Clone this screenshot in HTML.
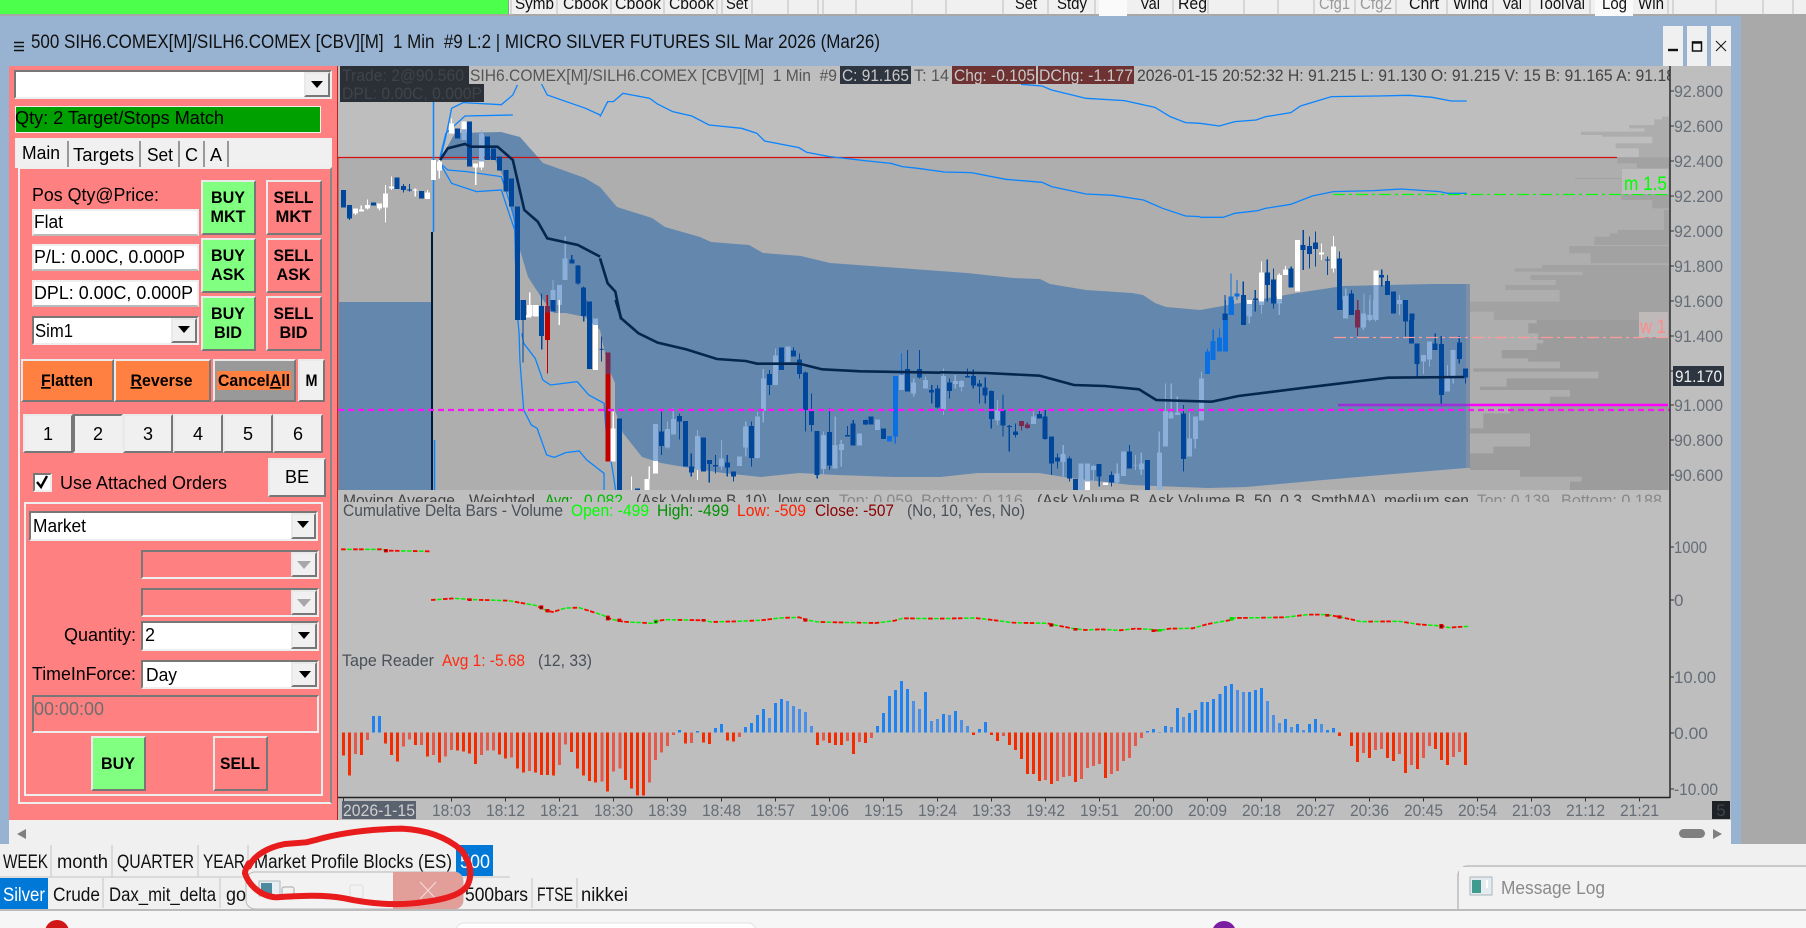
<!DOCTYPE html>
<html><head><meta charset="utf-8"><title>Chart</title>
<style>
html,body{margin:0;padding:0;width:1806px;height:928px;overflow:hidden;background:#f0f0f0}
.a{position:absolute;box-sizing:border-box}
.b{position:absolute;box-sizing:border-box;border:2px solid;border-color:#e9e9e9 #777 #777 #e9e9e9;background:#f0f0f0}
.s{position:absolute;box-sizing:border-box;border:2px solid;border-color:#777 #eee #eee #777;background:#fff}
.g{background:#80ff80}.p{background:#ff8080}.o{background:#ff8040}
svg{position:absolute;left:0;top:0}
text{font-family:"Liberation Sans",sans-serif;font-size:17px}
.pn text{font-size:18px}
.pn g text{font-size:17px}
.z path{fill:none;vector-effect:non-scaling-stroke}
.z path.f{stroke:none}
.w{stroke-width:1.2;shape-rendering:crispEdges}
.k{stroke-width:5;shape-rendering:crispEdges}
.D{stroke:#00479b}.L{stroke:#8bafd8}.W{stroke:#fff}.B{stroke:#0a6fe0}.R{stroke:#c00000}.P{stroke:#7a2a50}
.l{stroke:#0a84ff;stroke-width:1.3}
.m{stroke:#05264f;stroke-width:2.6}
.t{stroke-width:3;shape-rendering:crispEdges}
</style></head>
<body>
<!-- top strip -->
<div class="a" style="left:0;top:0;width:509px;height:14px;background:#4cff4c;border-right:1px solid #8aa08a"></div>
<div class="a" style="left:0;top:14px;width:1806px;height:2px;background:#a8a8a8"></div>
<div class="a" style="left:1099px;top:0;width:28px;height:16px;background:#fafafa"></div>
<div class="a" style="left:1595px;top:0;width:38px;height:16px;background:#fafafa"></div>
<!-- blue window -->
<div class="a" style="left:0;top:16px;width:1741px;height:828px;background:#98b3d1"></div>
<div class="a" style="left:1741px;top:16px;width:65px;height:828px;background:#a9a9a9"></div>
<div class="a" style="left:9px;top:820px;width:1722px;height:24px;background:#f0f0f0"></div>
<div class="a" style="left:1663px;top:26px;width:20px;height:40px;background:#f0f0f0"></div>
<div class="a" style="left:1687px;top:26px;width:20px;height:40px;background:#f0f0f0"></div>
<div class="a" style="left:1711px;top:26px;width:20px;height:40px;background:#f0f0f0"></div>
<!-- left panel -->
<div class="a" style="left:9px;top:66px;width:329px;height:754px;background:#ff8080;border-right:1px solid #c02020"></div>
<div class="s" style="left:14px;top:70px;width:318px;height:29px"></div>
<div class="b" style="left:304px;top:72px;width:26px;height:25px"></div>
<div class="a" style="left:15px;top:106px;width:306px;height:27px;background:#00a000;border:1px solid #eee"></div>
<div class="a" style="left:15px;top:138px;width:317px;height:30px;background:#f0f0f0"></div>
<div class="a" style="left:67px;top:141px;width:2px;height:26px;background:#999"></div>
<div class="a" style="left:139px;top:141px;width:2px;height:26px;background:#999"></div>
<div class="a" style="left:178px;top:141px;width:2px;height:26px;background:#999"></div>
<div class="a" style="left:203px;top:141px;width:2px;height:26px;background:#999"></div>
<div class="a" style="left:227px;top:141px;width:2px;height:26px;background:#999"></div>
<div class="a" style="left:18px;top:167px;width:314px;height:637px;border:2px solid;border-color:#eee #888 #eee #eee"></div>
<div class="s" style="left:32px;top:209px;width:167px;height:27px;border-color:#eee #eee #bbb #eee"></div>
<div class="s" style="left:32px;top:244px;width:167px;height:27px;border-color:#eee #eee #bbb #eee"></div>
<div class="s" style="left:32px;top:280px;width:167px;height:27px;border-color:#eee #eee #bbb #eee"></div>
<div class="s" style="left:32px;top:316px;width:167px;height:29px"></div>
<div class="b" style="left:171px;top:318px;width:26px;height:25px"></div>
<div class="b g" style="left:201px;top:180px;width:55px;height:55px"></div>
<div class="b p" style="left:266px;top:180px;width:56px;height:55px"></div>
<div class="b g" style="left:201px;top:238px;width:55px;height:55px"></div>
<div class="b p" style="left:266px;top:238px;width:56px;height:55px"></div>
<div class="b g" style="left:201px;top:296px;width:55px;height:55px"></div>
<div class="b p" style="left:266px;top:296px;width:56px;height:55px"></div>
<div class="b o" style="left:21px;top:359px;width:93px;height:43px"></div>
<div class="b o" style="left:114px;top:359px;width:97px;height:43px"></div>
<div class="b" style="left:213px;top:359px;width:83px;height:43px;background:#999"></div>
<div class="a o" style="left:217px;top:371px;width:74px;height:19px"></div>
<div class="b" style="left:298px;top:359px;width:27px;height:43px"></div>
<div class="b" style="left:23px;top:414px;width:50px;height:39px"></div>
<div class="b" style="left:73px;top:414px;width:50px;height:39px;border-color:#777 #eee #eee #777"></div>
<div class="b" style="left:123px;top:414px;width:50px;height:39px"></div>
<div class="b" style="left:173px;top:414px;width:50px;height:39px"></div>
<div class="b" style="left:223px;top:414px;width:50px;height:39px"></div>
<div class="b" style="left:273px;top:414px;width:50px;height:39px"></div>
<div class="b" style="left:268px;top:458px;width:58px;height:39px"></div>
<div class="s" style="left:33px;top:473px;width:19px;height:19px"></div>
<div class="a" style="left:24px;top:502px;width:299px;height:294px;border:2px solid #eee"></div>
<div class="s" style="left:29px;top:511px;width:289px;height:30px"></div>
<div class="b" style="left:291px;top:513px;width:25px;height:26px"></div>
<div class="s" style="left:141px;top:550px;width:178px;height:29px;background:#ff8080"></div>
<div class="b" style="left:291px;top:552px;width:26px;height:25px"></div>
<div class="s" style="left:141px;top:588px;width:178px;height:29px;background:#ff8080"></div>
<div class="b" style="left:291px;top:590px;width:26px;height:25px"></div>
<div class="s" style="left:141px;top:621px;width:178px;height:30px"></div>
<div class="b" style="left:291px;top:623px;width:26px;height:26px"></div>
<div class="s" style="left:141px;top:660px;width:178px;height:29px"></div>
<div class="b" style="left:291px;top:662px;width:26px;height:25px"></div>
<div class="s" style="left:32px;top:695px;width:287px;height:38px;background:#ff8080"></div>
<div class="b g" style="left:91px;top:736px;width:55px;height:55px"></div>
<div class="b p" style="left:213px;top:736px;width:55px;height:55px"></div>

<svg width="1806" height="928" viewBox="0 0 1806 928">
<!-- toolbar separators -->
<path d="M511 0V15M557 0V15M611 0V15M664 0V15M717 0V15M722 0V15M752 0V15M788 0V15M818 0V15M823 0V15M856 0V15M912 0V15M946 0V15M1003 0V15M1048 0V15M1095 0V15M1173 0V15M1208 0V15M1244 0V15M1278 0V15M1314 0V15M1355 0V15M1396 0V15M1447 0V15M1493 0V15M1530 0V15M1590 0V15M1668 0V15M1673 0V15M1716 0V15M1763 0V15M1793 0V15" stroke="#bbb" stroke-width="1"/>
<g fill="#111">
<text x="515" y="9" textLength="39" lengthAdjust="spacingAndGlyphs">Symb</text>
<text x="563" y="9" textLength="45" lengthAdjust="spacingAndGlyphs">Cbook</text>
<text x="615" y="9" textLength="46" lengthAdjust="spacingAndGlyphs">Cbook</text>
<text x="669" y="9" textLength="45" lengthAdjust="spacingAndGlyphs">Cbook</text>
<text x="726" y="9" textLength="22" lengthAdjust="spacingAndGlyphs">Set</text>
<text x="1015" y="9" textLength="22" lengthAdjust="spacingAndGlyphs">Set</text>
<text x="1057" y="9" textLength="30" lengthAdjust="spacingAndGlyphs">Stdy</text>
<text x="1140" y="9" textLength="20" lengthAdjust="spacingAndGlyphs">Val</text>
<text x="1178" y="9" textLength="29" lengthAdjust="spacingAndGlyphs">Reg</text>
<text x="1319" y="9" textLength="31" lengthAdjust="spacingAndGlyphs" fill="#999">Cfg1</text>
<text x="1360" y="9" textLength="32" lengthAdjust="spacingAndGlyphs" fill="#999">Cfg2</text>
<text x="1409" y="9" textLength="30" lengthAdjust="spacingAndGlyphs">Chrt</text>
<text x="1453" y="9" textLength="35" lengthAdjust="spacingAndGlyphs">Wind</text>
<text x="1502" y="9" textLength="20" lengthAdjust="spacingAndGlyphs">Val</text>
<text x="1537" y="9" textLength="48" lengthAdjust="spacingAndGlyphs">ToolVal</text>
<text x="1602" y="9" textLength="25" lengthAdjust="spacingAndGlyphs">Log</text>
<text x="1638" y="9" textLength="26" lengthAdjust="spacingAndGlyphs">Win</text>
</g>
<!-- title -->
<path d="M14 42.5H24M14 46.5H24M14 50.5H24" stroke="#111" stroke-width="1.6"/>
<text x="31" y="48" style="font-size:19px" fill="#111" textLength="849" lengthAdjust="spacingAndGlyphs" xml:space="preserve">500 SIH6.COMEX[M]/SILH6.COMEX [CBV][M]  1 Min  #9 L:2 | MICRO SILVER FUTURES SIL Mar 2026 (Mar26)</text>
<path d="M1668 50H1678" stroke="#111" stroke-width="2.4"/>
<rect x="1692.5" y="42" width="9" height="9" fill="none" stroke="#111" stroke-width="1.5"/><path d="M1692 42.5H1702" stroke="#111" stroke-width="2.4"/>
<path d="M1716 41L1726 51M1726 41L1716 51" stroke="#111" stroke-width="1"/>

<!-- chart backgrounds -->
<rect x="338" y="66" width="1393" height="754" fill="#bebebe"/>
<rect x="338" y="157" width="1332" height="333" fill="#aeaeae"/>

<!-- profile -->
<g class="z" transform="translate(1200,0) scale(.3866,.3333)">
<path class="f" style="fill:#adadad" d="M1195 350H1213V358H1195ZM1175 358H1213V375H1175ZM1110 375H1213V385H1110ZM1150 385H1213V395H1150ZM985 395H1213V405H985ZM1040 405H1213V410H1040ZM1170 410H1213V430H1170ZM1075 430H1213V445H1075ZM1135 445H1213V472H1135Z"/>
<path class="f" style="fill:#a2a2a2" d="M1080 472H1213V490H1080ZM1130 490H1213V505H1130ZM970 534H1213V537H970ZM1090 583H1213V600H1090ZM1170 600H1213V625H1170ZM1200 630H1213V690H1200ZM1080 690H1213V700H1080ZM1060 700H1213V710H1060ZM1020 710H1213V735H1020ZM955 738H1213V760H955ZM1010 760H1213V790H1010ZM885 795H1213V805H885ZM815 805H1213V815H815ZM990 815H1213V825H990ZM855 825H1213V840H855ZM920 840H1213V855H920ZM790 855H1213V870H790ZM930 870H1213V905H930ZM570 905H1213V935H570ZM760 935H1213V960H760Z"/>
</g>
<g class="z" transform="translate(1450,290) scale(.3333,.3333)">
<path class="f" style="fill:#9c9c9c" d="M260 90H655V100H260ZM235 100H655V130H235ZM265 130H655V150H265ZM280 150H655V160H280ZM260 160H655V180H260ZM155 180H655V205H155ZM235 205H655V215H235ZM330 215H655V235H330ZM70 235H655V245H70ZM445 245H655V265H445ZM170 265H655V290H170ZM90 290H655V300H90ZM360 300H655V320H360ZM300 320H655V350H300ZM180 350H655V370H180ZM100 370H655V415H100ZM50 415H655V430H50ZM240 430H655V470H240ZM130 470H655V490H130ZM60 490H655V540H60ZM210 540H655V560H210ZM395 560H655V575H395ZM360 575H655V600H360Z"/>
</g>

<!-- value band -->
<polygon fill="#6487ae" points="440,160 455,133 501,132 520,137 543,163 585,178 600,187 617,207 652,218 665,227 700,237 711,242 749,245 763,253 801,256 830,263 899,268 967,273 1013,278 1040,279 1050,284 1086,290 1132,293 1143,295 1155,303 1166,307 1200,310 1297,293 1343,286 1432,284 1466,284 1466,468 1418,472 1323,480 1246,487 1208,488 1131,485 1070,478 1039,473 978,473 940,477 895,477 837,475 799,473 761,477 723,473 684,467 661,463 642,457 623,433 615,410 615,383 608,367 600,330 585,317 566,313 554,313 543,300 528,277 517,240 510,200 505,180 495,160 470,160"/>
<rect x="1466" y="284" width="4" height="184" fill="#7d8fa6"/>
<rect x="339" y="302" width="92" height="188" fill="#6487ae"/>

<!-- red line -->
<path d="M338 157.5H1617" stroke="#d01010" stroke-width="1.2"/>
<path d="M338 157V490" stroke="#c03030" stroke-width="1"/>

<!-- vertical start line -->
<path d="M433.5 102V232" stroke="#0a84ff" stroke-width="1.5"/>
<path d="M432 232V490" stroke="#001a3a" stroke-width="2"/>
<path d="M434.5 440V490" stroke="#0a84ff" stroke-width="1.5"/>

<!-- blue envelope lines -->
<g class="z">
<g transform="scale(.3827,.3333)">
<path class="l" d="M1415 252L1430 285L1530 325L1568 345"/>
<path class="l" d="M1150 480L1165 410L1180 325L1210 308L1310 314L1340 285L1352 255"/>
<path class="l" d="M1150 470L1165 400L1215 348L1340 345"/>
<path class="l" d="M1150 490L1170 510L1220 515L1310 530L1330 600L1345 660L1350 960"/>
<path class="l" d="M1150 490L1180 550L1245 575L1310 570L1330 640L1345 690L1350 900"/>
</g>
<g transform="translate(340,300) scale(.3827,.3333)">
<path class="l" d="M460 0L468 100L470 180L480 330L500 375L515 385L540 465L560 472L590 458L625 453L645 480L690 520L690 570"/>
<path class="l" d="M475 100L480 130L510 175L530 240L550 255L620 245L650 285L690 310L695 390L715 530L720 570"/>
</g>
<g transform="translate(600,0) scale(.3827,.3333)">
<path class="l" d="M0 350L20 305L35 305L60 280L130 295L150 312L190 335L240 348L285 375L370 385L410 400L430 423L520 443L540 457L600 470L700 483L760 490L790 500L830 505L900 516L970 518L1060 538L1155 547L1180 560L1270 582L1340 586L1420 600L1470 625L1530 648L1568 650"/>
<path class="l" d="M1100 253L1155 258L1180 270L1270 295L1370 302L1450 322L1490 350L1530 368L1568 370"/>
</g>
<g transform="translate(1200,0) scale(.3866,.3333)">
<path class="l" d="M0 370L50 378L90 365L145 360L170 350L235 338L260 318L340 290L460 288L540 286L600 292L650 303L690 303"/>
<path class="l" d="M0 652L60 652L90 640L150 632L170 625L235 613L290 588L345 575L450 572L520 567L620 575L640 580L690 580"/>
</g>
</g>

<!-- candles -->
<g class="z" transform="scale(.3827,.3333)">
<path class="w D" d="M897 570V622M913 615V660M976 607V617M1038 533V567M1054 552V578M1070 552V575M1101 573V595M1195 385V415M1227 365V500M1274 410V480M1290 445V480M1305 470V512M1322 510V575M1337 535V620M1352 620V960M1368 900V960M1415 880V960M1494 765V790M1510 795V855M1525 860V950"/>
<path class="k D" d="M897 570V622M913 615V655M976 607V617M1038 533V567M1054 558V570M1070 568V571M1101 573V595M1195 385V415M1227 365V500M1274 410V480M1290 445V480M1305 470V512M1322 510V575M1337 535V620M1352 620V960M1368 900V960M1415 920V960M1494 778V790M1510 797V850M1525 862V948"/>
<path class="w W" d="M929 625V645M944 617V635M960 598V628M992 610V632M1007 555V668M1023 530V570M1085 565V590M1117 570V597M1148 480V535M1180 355V400M1243 490V555M1258 485V510M1384 878V950M1400 915V950"/>
<path class="k W" d="M929 625V640M944 628V634M960 615V625M992 610V625M1007 580V622M1023 560V565M1085 568V572M1117 577V597M1133 480V540M1148 485V512M1180 370V400M1212 365V387M1243 490V503M1258 485V503M1384 915V950M1400 915V950"/>
<path class="w L" d="M1477 710V775M1445 840V870M1258 390V400"/>
<path class="k L" d="M1212 390V420M1258 400V485M1477 775V840M1462 855V915M1445 870V920"/>
<path class="w R" d="M1430 885V918"/>
</g>
<g class="z" transform="translate(340,300) scale(.3827,.3333)">
<path class="w D" d="M478 0V188M527 18V148M557 0V35M637 0V65M652 5V207M683 110V185M730 355V570M778 565V570M840 335V465M887 340V418M903 363V500M918 460V530M950 413V515M965 480V548M981 465V520M1012 465V530M1028 515V545M1075 365V500M1122 210V285M1154 143V210M1185 143V170M1201 160V235M1216 215V395M1232 280V395M1247 393V535M1279 325V510M1326 378V410M1341 360V437M1373 358V375M1388 350V373M1420 385V417M1483 150V275M1514 150V235M1546 255V310M1561 255V325"/>
<path class="k D" d="M478 0V60M527 18V108M557 0V35M637 0V47M652 5V207M730 355V570M778 565V570M840 395V438M887 348V365M903 363V500M918 500V518M950 413V515M965 480V492M981 495V500M1012 488V503M1028 515V530M1075 378V474M1122 222V255M1154 143V210M1185 152V170M1201 178V222M1216 217V330M1232 332V375M1247 393V525M1279 396V497M1326 405V410M1341 370V437M1373 360V373M1388 350V373M1420 385V417M1483 207V275M1514 207V233M1546 270V278M1561 265V323"/>
<path class="w W" d="M493 45V52M510 15V48M573 0V75M668 55V75M714 335V385M762 530V570M808 500V537M934 510V540"/>
<path class="k W" d="M493 45V52M510 15V48M668 75V210M714 385V485M802 537V570M824 483V520"/>
<path class="w L" d="M824 372V483M856 365V445M871 325V403M934 390V510M997 420V510M1060 365V470M1091 335V475M1106 207V368M1138 145V255M1263 395V525M1294 350V505M1310 420V500M1404 358V390M1499 235V290M1530 230V265"/>
<path class="k L" d="M668 55V75M824 372V483M856 387V443M871 357V403M934 408V508M997 475V500M1044 470V498M1060 380V443M1091 350V474M1106 235V333M1138 167V255M1170 140V186M1263 405V507M1294 435V505M1310 432V450M1357 400V437M1404 358V390M1499 247V280M1530 240V265"/>
<path class="w R" d="M542 18V220"/>
<path class="k R" d="M542 38V120M700 222V485"/>
<path class="k P" d="M542 18V38M700 158V222"/>
<path class="w B" d="M1451 228V430M1467 160V270"/>
<path class="k B" d="M1436 408V425M1451 228V410"/>
<path class="k L" d="M1467 225V270" />
<path d="M678 148H689" stroke="#00479b" stroke-width="1"/>
</g>
<g class="z" transform="translate(940,300) scale(.3827,.3333)">
<path class="w D" d="M25 235V295M72 205V233M87 208V265M103 240V310M118 232V310M134 272V385M165 283V410M181 375V455M197 370V412M260 330V355M275 330V418M291 410V525M307 460V505M338 470V545M354 537V570M416 492V560M448 515V560M495 435V505M542 480V570M636 315V515M793 0V75M871 0V10M1045 0V30M1075 0V45M1185 0V40M1216 0V110M1232 40V130M1247 130V230M1294 100V150M1310 108V320M1357 108V190M1373 205V250"/>
<path class="k D" d="M25 247V273M72 228V233M87 228V257M103 250V260M118 262V287M134 273V357M165 330V377M181 378V381M197 395V405M260 342V355M275 350V417M291 410V490M307 473V485M338 475V535M354 537V570M416 492V530M448 525V547M495 455V505M542 480V570M636 340V477M793 0V75M871 0V10M1045 0V30M1075 0V45M1185 0V40M1201 0V10M1216 5V65M1232 60V130M1247 130V192M1294 130V150M1310 132V285M1357 127V177M1373 205V232"/>
<path class="w L" d="M9 205V345M40 225V265M56 240V275M150 300V375M244 330V372M322 435V530M401 495V545M463 490V550M511 465V510M526 458V525M573 395V570M589 250V440M604 250V355M620 290V345M652 338V470M667 350V445M683 215V362M808 0V70M840 0V40M887 0V45M1060 0V55M1106 40V90M1122 0V65M1138 0V65M1263 165V222M1279 125V200M1326 195V275M1341 150V250"/>
<path class="k L" d="M9 228V328M40 243V252M56 243V261M150 330V362M244 350V372M322 462V486M369 490V570M385 490V545M401 498V510M463 520V548M479 455V528M511 495V497M526 490V508M573 457V570M589 333V440M604 337V355M620 337V345M652 415V470M667 350V417M683 235V362M808 0V45M840 0V15M887 0V10M1060 0V55M1106 40V83M1122 45V50M1138 0V55M1263 165V185M1279 125V178M1326 235V275M1341 150V230"/>
<path class="k W" d="M385 545V570M432 547V555"/>
<path class="w B" d="M699 145V222M714 88V180M730 85V155M746 0V155"/>
<path class="k B" d="M699 155V222M714 123V180M730 112V155M746 42V155M762 0V45"/>
<path class="w P" d="M213 363V392M228 368V385M1091 0V108"/>
<path class="k P" d="M213 363V378M228 373V384M1091 30V83"/>
</g>
<g class="z" transform="translate(1200,0) scale(.3866,.3333)">
<path class="w D" d="M65 885V960M112 845V960M143 870V935M174 778V905M190 805V925M236 800V862M267 690V810M283 710V805M299 695V800M330 770V825M361 755V930M392 870V945M470 808V860M485 825V885M500 875V940M532 900V960M548 940V960"/>
<path class="k D" d="M65 940V960M112 885V960M143 895V900M174 818V855M190 838V905M236 805V862M267 735V750M283 738V762M299 727V747M330 778V782M361 775V930M392 880V945M470 825V832M485 843V885M500 875V940M532 900V960M548 940V960"/>
<path class="w B" d="M80 820V945M96 840V900"/>
<path class="k B" d="M80 890V945M96 880V890"/>
<path class="w L" d="M128 880V950M205 897V945M377 865V945M424 880V950M440 885V960M516 885V945"/>
<path class="k L" d="M128 912V950M205 897V908M377 888V930M424 950V960M440 945V960M455 855V960M516 900V912"/>
<path class="w W" d="M159 785V818M221 798V808M314 730V780M345 708V740M345 805V818M205 820V825"/>
<path class="k W" d="M128 900V912M159 818V905M205 825V897M221 808V825M252 720V875M314 757V763M345 740V805M455 812V855"/>
<path class="w P" d="M408 900V930"/>
<path class="k P" d="M408 930V960"/>
</g>

<!-- MA line -->
<g class="z">
<g transform="scale(.3827,.3333)"><path class="m" d="M1150 480L1170 445L1215 432L1230 440L1300 440L1340 480L1370 630L1405 665L1430 715L1510 735L1568 770"/></g>
<g transform="translate(600,0) scale(.3827,.3333)"><path class="m" d="M0 775L20 850L40 875L55 958"/></g>
<g transform="translate(340,300) scale(.3827,.3333)"><path class="m" d="M720 0L735 55L780 100L830 128L905 148L985 177L1060 183L1090 191L1200 191L1260 208L1360 214L1568 218"/></g>
<g transform="translate(940,300) scale(.3827,.3333)"><path class="m" d="M0 217L120 219L260 227L350 255L430 258L520 268L565 300L710 305L780 288L940 265L1170 233L1370 231"/></g>
</g>

<!-- horizontal levels -->
<path d="M338 410H1670" stroke="#ff10ff" stroke-width="2.2" stroke-dasharray="6 4"/>
<path d="M1338 405H1469" stroke="#9b30d8" stroke-width="2.5"/>
<path d="M1469 405H1668" stroke="#ff00ff" stroke-width="2.5"/>
<path d="M1333 194.500H1668" stroke="#00ff00" stroke-width="1.3" stroke-dasharray="12 4 3 4"/>
<path d="M1334 337.500H1668" stroke="#ff9a9a" stroke-width="1.3" stroke-dasharray="12 4 3 4"/>
<rect x="1622" y="169" width="46" height="25" fill="#bdbdbd"/>
<text x="1624" y="190" fill="#00ff00" textLength="43" lengthAdjust="spacingAndGlyphs" style="font-size:19px">m 1.5</text>
<rect x="1639" y="312" width="29" height="25" fill="#bfb9b9"/>
<text x="1640" y="333" fill="#ff8a8a" textLength="26" lengthAdjust="spacingAndGlyphs" style="font-size:19px" xml:space="preserve">w 1</text>

<!-- indicator label row (clipped) -->
<g fill="#444">
<text x="343" y="506" textLength="112" lengthAdjust="spacingAndGlyphs">Moving Average</text>
<text x="469" y="506" textLength="66" lengthAdjust="spacingAndGlyphs">Weighted</text>
<text x="545" y="506" textLength="28" lengthAdjust="spacingAndGlyphs" fill="#00a000">Avg:</text>
<text x="584" y="506" textLength="39" lengthAdjust="spacingAndGlyphs" fill="#00c000">0.082</text>
<text x="636" y="506" textLength="131" lengthAdjust="spacingAndGlyphs">(Ask Volume B, 10)</text>
<text x="778" y="506" textLength="52" lengthAdjust="spacingAndGlyphs">low sen</text>
<text x="839" y="506" textLength="74" lengthAdjust="spacingAndGlyphs" fill="#888">Top: 0.059</text>
<text x="921" y="506" textLength="102" lengthAdjust="spacingAndGlyphs" fill="#888">Bottom: 0.116</text>
<text x="1037" y="506" textLength="339" lengthAdjust="spacingAndGlyphs">(Ask Volume B, Ask Volume B, 50, 0.3, SmthMA)</text>
<text x="1384" y="506" textLength="85" lengthAdjust="spacingAndGlyphs">medium sen</text>
<text x="1477" y="506" textLength="73" lengthAdjust="spacingAndGlyphs" fill="#888">Top: 0.139</text>
<text x="1561" y="506" textLength="101" lengthAdjust="spacingAndGlyphs" fill="#888">Bottom: 0.188</text>
</g>
<rect x="338" y="502" width="1332" height="295" fill="#bebebe"/>
<rect x="338" y="490" width="1332" height="1" fill="#bebebe"/>

<!-- cumulative delta -->
<g>
<text x="343" y="516" fill="#4a5058" textLength="220" lengthAdjust="spacingAndGlyphs">Cumulative Delta Bars - Volume</text>
<text x="571" y="516" fill="#00ff00" textLength="78" lengthAdjust="spacingAndGlyphs">Open: -499</text>
<text x="657" y="516" fill="#009000" textLength="72" lengthAdjust="spacingAndGlyphs">High: -499</text>
<text x="737" y="516" fill="#ff2000" textLength="69" lengthAdjust="spacingAndGlyphs">Low: -509</text>
<text x="815" y="516" fill="#8b0000" textLength="79" lengthAdjust="spacingAndGlyphs">Close: -507</text>
<text x="907" y="516" fill="#4a5058" textLength="118" lengthAdjust="spacingAndGlyphs">(No, 10, Yes, No)</text>
<text x="342" y="666" fill="#4a5058" textLength="92" lengthAdjust="spacingAndGlyphs">Tape Reader</text>
<text x="442" y="666" fill="#ff2a10" textLength="83" lengthAdjust="spacingAndGlyphs">Avg 1: -5.68</text>
<text x="538" y="666" fill="#4a5058" textLength="54" lengthAdjust="spacingAndGlyphs">(12, 33)</text>
</g>
<g class="z">
<g transform="translate(340,490) scale(.3827,.3333)">
<path d="M3 178L110 178L124 182L235 184M238 330L300 325L345 329L440 332L470 338L510 346L540 362L556 366L590 354L625 353L685 375L710 388L740 395L815 400L830 393L850 389L950 391L970 396L1040 394L1100 391L1150 384L1200 382L1220 390L1250 396L1400 399L1450 392L1470 385L1568 386" stroke="#00f000" stroke-width="1.5" stroke-dasharray="4.5 1.500"/>
<path d="M3 178L110 178L124 182L235 184M238 330L300 325L345 329L440 332L470 338L510 346L540 362L556 366L590 354L625 353L685 375L710 388L740 395L815 400L830 393L850 389L950 391L970 396L1040 394L1100 391L1150 384L1200 382L1220 390L1250 396L1400 399L1450 392L1470 385L1568 386" stroke="#ff0000" stroke-width="1.8" stroke-dasharray="4.5 7.5 4.5 1.500 4.5 13.5"/>
<path d="M120 177V187M339 325V333M526 346V358M542 357V367M700 377V391M730 386V396M950 387V395M1216 385V395" stroke="#e00000" stroke-width="4"/>
<path d="M825 389V401" stroke="#00e000" stroke-width="4"/>
<path d="M120 180V184M526 350V355M700 381V388M825 393V398" stroke="#500000" stroke-width="2"/>
<path class="t" style="stroke:#f52b00" d="M9 728V797M25 728V857M56 728V795M119 728V760M135 728V795M150 728V815M197 728V765M229 728V800M260 728V818M307 728V782M323 728V785M339 728V790M354 728V822M417 728V793M433 728V806M464 728V836M480 728V848M511 728V848M527 728V855M542 728V855M558 728V857M605 728V786M621 728V836M636 728V857M652 728V873M668 728V878M699 728V905M746 728V870M762 728V896M778 728V917M793 728V917M903 728V761M950 728V757M966 728V762M1013 728V752M1028 728V755M1248 728V765M1279 728V759M1295 728V765M1311 728V765M1342 728V792M1373 728V759"/>
<path class="t" style="stroke:#e5594a" d="M40 728V792M72 728V750M166 728V770M182 728V748M213 728V765M244 728V795M276 728V800M291 728V780M370 728V795M386 728V782M401 728V782M448 728V803M495 728V843M574 728V825M589 728V763M684 728V875M715 728V845M731 728V835M809 728V878M825 728V810M840 728V788M856 728V768M872 728V735M919 728V759M1044 728V741M1263 728V752M1326 728V753M1358 728V756M1389 728V744"/>
<path class="t" style="stroke:#1e82f0" d="M87 728V678M103 728V678M887 728V720M934 728V723M981 728V714M997 728V702M1060 728V711M1075 728V699M1091 728V675M1107 728V657M1138 728V639M1154 728V627M1405 728V708M1420 728V669M1436 728V618M1452 728V600M1467 728V573M1483 728V597M1530 728V606"/>
<path class="t" style="stroke:#4b90e6" d="M1122 728V684M1169 728V633M1185 728V648M1201 728V657M1216 728V666M1232 728V708M1499 728V633M1514 728V657M1546 728V693M1561 728V687"/>
</g>
<g transform="translate(940,490) scale(.3827,.3333)">
<path d="M0 386L90 384L130 389L190 398L280 400L300 405L350 416L380 420L420 418L470 421L510 416L550 418L570 422L600 416L660 415L700 402L760 390L770 384L850 383L900 382L960 374L1010 374L1050 382L1100 395L1200 394L1250 403L1310 408L1330 413L1380 409" stroke="#00f000" stroke-width="1.5" stroke-dasharray="4.5 1.500"/>
<path d="M0 386L90 384L130 389L190 398L280 400L300 405L350 416L380 420L420 418L470 421L510 416L550 418L570 422L600 416L660 415L700 402L760 390L770 384L850 383L900 382L960 374L1010 374L1050 382L1100 395L1200 394L1250 403L1310 408L1330 413L1380 409" stroke="#ff0000" stroke-width="1.8" stroke-dasharray="4.5 7.5 4.5 1.500 4.5 13.5"/>
<path d="M291 400V410M354 414V422M558 418V426M1012 372V380M1044 376V386M1310 402V416" stroke="#e00000" stroke-width="4"/>
<path d="M574 417V425M762 381V392" stroke="#00e000" stroke-width="4"/>
<path d="M291 403V407M1310 406V412" stroke="#500000" stroke-width="2"/>
<path class="t" style="stroke:#f52b00" d="M87 728V735M135 728V735M150 728V753M182 728V765M197 728V780M213 728V807M229 728V852M244 728V852M260 728V873M291 728V882M354 728V876M433 728V864M1044 728V738M1075 728V768M1091 728V816M1122 728V804M1169 728V804M1185 728V813M1216 728V849M1248 728V837M1295 728V777M1311 728V810M1326 728V825M1373 728V825"/>
<path class="t" style="stroke:#e5594a" d="M166 728V738M276 728V870M307 728V873M323 728V861M339 728V858M370 728V867M386 728V834M401 728V828M417 728V822M448 728V852M464 728V843M480 728V813M495 728V804M511 728V768M527 728V744M1107 728V789M1138 728V780M1154 728V777M1201 728V792M1232 728V825M1263 728V804M1279 728V768M1342 728V801M1358 728V786"/>
<path class="t" style="stroke:#1e82f0" d="M9 728V672M40 728V663M119 728V696M103 728V717M542 728V723M558 728V717M589 728V708M621 728V654M652 728V669M668 728V660M684 728V636M699 728V636M715 728V627M731 728V612M746 728V588M762 728V582M809 728V606M825 728V600M840 728V594M903 728V687M934 728V702M966 728V702M981 728V687M1013 728V720M1028 728V714"/>
<path class="t" style="stroke:#4b90e6" d="M25 728V675M56 728V690M72 728V708M574 728V726M605 728V711M636 728V681M778 728V600M793 728V606M856 728V633M872 728V675M887 728V699M919 728V711M950 728V720M997 728V702"/>
</g>
</g>

<!-- header row -->
<rect x="340" y="66" width="129" height="18" fill="#2b2f36"/>
<rect x="340" y="84" width="144" height="18" fill="#2b2f36"/>
<rect x="840" y="66" width="71" height="18" fill="#2d3640"/>
<rect x="952" y="66" width="84" height="18" fill="#6e3232"/>
<rect x="1038" y="66" width="96" height="18" fill="#6e3232"/>
<text x="342" y="81" fill="#3f444c" textLength="122" lengthAdjust="spacingAndGlyphs">Trade: 2@90.560</text>
<text x="342" y="99" fill="#3f444c" textLength="140" lengthAdjust="spacingAndGlyphs">DPL: 0.00C, 0.000P</text>
<text x="470" y="81" fill="#555" textLength="367" lengthAdjust="spacingAndGlyphs" xml:space="preserve">SIH6.COMEX[M]/SILH6.COMEX [CBV][M]  1 Min  #9</text>
<text x="842" y="81" fill="#c8c8c8" textLength="67" lengthAdjust="spacingAndGlyphs">C: 91.165</text>
<text x="914" y="81" fill="#555" textLength="35" lengthAdjust="spacingAndGlyphs">T: 14</text>
<text x="954" y="81" fill="#c8c8c8" textLength="81" lengthAdjust="spacingAndGlyphs">Chg: -0.105</text>
<text x="1039" y="81" fill="#c8c8c8" textLength="94" lengthAdjust="spacingAndGlyphs">DChg: -1.177</text>
<svg x="0" y="60" width="1670" height="30" viewBox="0 60 1670 30"><text x="1137" y="81" fill="#444" textLength="538" lengthAdjust="spacingAndGlyphs">2026-01-15 20:52:32 H: 91.215 L: 91.130 O: 91.215 V: 15 B: 91.165 A: 91.18</text></svg>

<!-- axes -->
<path d="M1670 66V798" stroke="#222" stroke-width="1.4"/>
<path d="M338 797.500H1670" stroke="#222" stroke-width="1.4"/>
<path d="M1670 91H1674M1670 126H1674M1670 161H1674M1670 196H1674M1670 231H1674M1670 266H1674M1670 301H1674M1670 336H1674M1670 371H1674M1670 405H1674M1670 440H1674M1670 475H1674M1670 547H1674M1670 600H1674M1670 677H1674M1670 733H1674M1670 789H1674" stroke="#333" stroke-width="1"/>
<path d="M343 799.500H344M451 799.500H1640" stroke="#333" stroke-width="4" stroke-dasharray="1 53"/>
<g fill="#666d76">
<text x="1674" y="97" textLength="49" lengthAdjust="spacingAndGlyphs">92.800</text>
<text x="1674" y="132" textLength="49" lengthAdjust="spacingAndGlyphs">92.600</text>
<text x="1674" y="167" textLength="49" lengthAdjust="spacingAndGlyphs">92.400</text>
<text x="1674" y="202" textLength="49" lengthAdjust="spacingAndGlyphs">92.200</text>
<text x="1674" y="237" textLength="49" lengthAdjust="spacingAndGlyphs">92.000</text>
<text x="1674" y="272" textLength="49" lengthAdjust="spacingAndGlyphs">91.800</text>
<text x="1674" y="307" textLength="49" lengthAdjust="spacingAndGlyphs">91.600</text>
<text x="1674" y="342" textLength="49" lengthAdjust="spacingAndGlyphs">91.400</text>
<text x="1674" y="411" textLength="49" lengthAdjust="spacingAndGlyphs">91.000</text>
<text x="1674" y="446" textLength="49" lengthAdjust="spacingAndGlyphs">90.800</text>
<text x="1674" y="481" textLength="49" lengthAdjust="spacingAndGlyphs">90.600</text>
<text x="1674" y="553" textLength="33" lengthAdjust="spacingAndGlyphs">1000</text>
<text x="1674" y="606">0</text>
<text x="1674" y="683" textLength="42" lengthAdjust="spacingAndGlyphs">10.00</text>
<text x="1674" y="739" textLength="34" lengthAdjust="spacingAndGlyphs">0.00</text>
<text x="1674" y="795" textLength="44" lengthAdjust="spacingAndGlyphs">-10.00</text>
</g>
<rect x="1673" y="366" width="51" height="20" fill="#2d3640"/>
<text x="1675" y="382" fill="#f0f0f0" textLength="47" lengthAdjust="spacingAndGlyphs">91.170</text>
<rect x="342" y="801" width="74" height="18" fill="#5a6270"/>
<text x="343" y="816" fill="#cfcfcf" textLength="72" lengthAdjust="spacingAndGlyphs">2026-1-15</text>
<g fill="#666d76" text-anchor="middle">
<text x="451.500" y="816" textLength="39" lengthAdjust="spacingAndGlyphs">18:03</text><text x="505.500" y="816" textLength="39" lengthAdjust="spacingAndGlyphs">18:12</text><text x="559.500" y="816" textLength="39" lengthAdjust="spacingAndGlyphs">18:21</text><text x="613.500" y="816" textLength="39" lengthAdjust="spacingAndGlyphs">18:30</text><text x="667.500" y="816" textLength="39" lengthAdjust="spacingAndGlyphs">18:39</text><text x="721.500" y="816" textLength="39" lengthAdjust="spacingAndGlyphs">18:48</text><text x="775.500" y="816" textLength="39" lengthAdjust="spacingAndGlyphs">18:57</text><text x="829.500" y="816" textLength="39" lengthAdjust="spacingAndGlyphs">19:06</text><text x="883.500" y="816" textLength="39" lengthAdjust="spacingAndGlyphs">19:15</text><text x="937.500" y="816" textLength="39" lengthAdjust="spacingAndGlyphs">19:24</text><text x="991.500" y="816" textLength="39" lengthAdjust="spacingAndGlyphs">19:33</text><text x="1045.500" y="816" textLength="39" lengthAdjust="spacingAndGlyphs">19:42</text><text x="1099.500" y="816" textLength="39" lengthAdjust="spacingAndGlyphs">19:51</text><text x="1153.500" y="816" textLength="39" lengthAdjust="spacingAndGlyphs">20:00</text><text x="1207.500" y="816" textLength="39" lengthAdjust="spacingAndGlyphs">20:09</text><text x="1261.500" y="816" textLength="39" lengthAdjust="spacingAndGlyphs">20:18</text><text x="1315.500" y="816" textLength="39" lengthAdjust="spacingAndGlyphs">20:27</text><text x="1369.500" y="816" textLength="39" lengthAdjust="spacingAndGlyphs">20:36</text><text x="1423.500" y="816" textLength="39" lengthAdjust="spacingAndGlyphs">20:45</text><text x="1477.500" y="816" textLength="39" lengthAdjust="spacingAndGlyphs">20:54</text><text x="1531.500" y="816" textLength="39" lengthAdjust="spacingAndGlyphs">21:03</text><text x="1585.500" y="816" textLength="39" lengthAdjust="spacingAndGlyphs">21:12</text><text x="1639.500" y="816" textLength="39" lengthAdjust="spacingAndGlyphs">21:21</text>
</g>
<rect x="1712" y="801" width="18" height="18" fill="#1e2126"/>
<text x="1721" y="816" fill="#3f444c" text-anchor="middle">5</text>

<!-- panel text -->
<g fill="#000" class="pn">
<text x="15" y="124" textLength="209" lengthAdjust="spacingAndGlyphs">Qty: 2 Target/Stops Match</text>
<text x="22" y="159" textLength="38" lengthAdjust="spacingAndGlyphs">Main</text>
<text x="73" y="161" textLength="61" lengthAdjust="spacingAndGlyphs">Targets</text>
<text x="147" y="161" textLength="26" lengthAdjust="spacingAndGlyphs">Set</text>
<text x="185" y="161" textLength="13" lengthAdjust="spacingAndGlyphs">C</text>
<text x="210" y="161" textLength="12" lengthAdjust="spacingAndGlyphs">A</text>
<text x="32" y="201" textLength="127" lengthAdjust="spacingAndGlyphs">Pos Qty@Price:</text>
<text x="34" y="228" textLength="29" lengthAdjust="spacingAndGlyphs">Flat</text>
<text x="34" y="263" textLength="151" lengthAdjust="spacingAndGlyphs">P/L: 0.00C, 0.000P</text>
<text x="34" y="299" textLength="159" lengthAdjust="spacingAndGlyphs">DPL: 0.00C, 0.000P</text>
<text x="35" y="337" textLength="38" lengthAdjust="spacingAndGlyphs">Sim1</text>
<text x="60" y="489" textLength="167" lengthAdjust="spacingAndGlyphs">Use Attached Orders</text>
<text x="33" y="532" textLength="53" lengthAdjust="spacingAndGlyphs">Market</text>
<text x="64" y="641" textLength="72" lengthAdjust="spacingAndGlyphs">Quantity:</text>
<text x="145" y="641">2</text>
<text x="32" y="680" textLength="104" lengthAdjust="spacingAndGlyphs">TimeInForce:</text>
<text x="146" y="681" textLength="31" lengthAdjust="spacingAndGlyphs">Day</text>
<text x="34" y="715" fill="#6e6e6e" textLength="70" lengthAdjust="spacingAndGlyphs">00:00:00</text>
<g text-anchor="middle" font-weight="bold">
<text x="228" y="203" textLength="34" lengthAdjust="spacingAndGlyphs">BUY</text><text x="228" y="222" textLength="35" lengthAdjust="spacingAndGlyphs">MKT</text>
<text x="293.500" y="203" textLength="40" lengthAdjust="spacingAndGlyphs">SELL</text><text x="293.500" y="222" textLength="36" lengthAdjust="spacingAndGlyphs">MKT</text>
<text x="228" y="261" textLength="34" lengthAdjust="spacingAndGlyphs">BUY</text><text x="228" y="280" textLength="34" lengthAdjust="spacingAndGlyphs">ASK</text>
<text x="293.500" y="261" textLength="40" lengthAdjust="spacingAndGlyphs">SELL</text><text x="293.500" y="280" textLength="34" lengthAdjust="spacingAndGlyphs">ASK</text>
<text x="228" y="319" textLength="34" lengthAdjust="spacingAndGlyphs">BUY</text><text x="228" y="338" textLength="28" lengthAdjust="spacingAndGlyphs">BID</text>
<text x="293.500" y="319" textLength="40" lengthAdjust="spacingAndGlyphs">SELL</text><text x="293.500" y="338" textLength="28" lengthAdjust="spacingAndGlyphs">BID</text>
<text x="67" y="386" textLength="52" lengthAdjust="spacingAndGlyphs"><tspan text-decoration="underline">F</tspan>latten</text>
<text x="161.500" y="386" textLength="62" lengthAdjust="spacingAndGlyphs"><tspan text-decoration="underline">R</tspan>everse</text>
<text x="254" y="386" textLength="72" lengthAdjust="spacingAndGlyphs">Cancel<tspan text-decoration="underline">A</tspan>ll</text>
<text x="311.500" y="386" textLength="12" lengthAdjust="spacingAndGlyphs">M</text>
<text x="118" y="769" textLength="34" lengthAdjust="spacingAndGlyphs">BUY</text>
<text x="240" y="769" textLength="40" lengthAdjust="spacingAndGlyphs">SELL</text>
</g>
<text x="48" y="440" text-anchor="middle">1</text><text x="98" y="440" text-anchor="middle">2</text><text x="148" y="440" text-anchor="middle">3</text><text x="198" y="440" text-anchor="middle">4</text><text x="248" y="440" text-anchor="middle">5</text><text x="298" y="440" text-anchor="middle">6</text>
<text x="297" y="483" text-anchor="middle">BE</text>
</g>
<!-- arrows -->
<path d="M311 81H323L317 88ZM178 326H190L184 333ZM297 521H309L303 528ZM298 632H310L304 639ZM299 671H311L305 678Z" fill="#000"/>
<path d="M297 561H311L304 569ZM297 599H311L304 607Z" fill="#a8a8a8"/>
<path d="M37 482L41 487L47 476" stroke="#000" stroke-width="2.4" fill="none"/>

<!-- bottom scroll -->
<path d="M26 829V839L17 834Z" fill="#808080"/>
<rect x="1679" y="829" width="26" height="9" rx="4.500" fill="#808080"/>
<path d="M1713 829V839L1722 834Z" fill="#808080"/>

<!-- tabs -->
<rect x="456" y="845" width="37" height="31" fill="#0078d7"/>
<rect x="0" y="878" width="48" height="31" fill="#0078d7"/>
<path d="M0 877H510M51 845V877M112 845V877M198 845V877M248 845V877M103 878V908M220 878V908M532 878V908M577 878V908" stroke="#c4c4c4" stroke-width="1"/>
<rect x="0" y="909" width="1806" height="2" fill="#bcbcbc"/>
<rect x="0" y="911" width="1457" height="17" fill="#f6f6f6"/>
<rect x="1457" y="911" width="349" height="17" fill="#f6f6f6"/>
<g fill="#111">
<text x="3" y="868" style="font-size:19px" textLength="45" lengthAdjust="spacingAndGlyphs">WEEK</text>
<text x="57" y="868" style="font-size:19px" textLength="51" lengthAdjust="spacingAndGlyphs">month</text>
<text x="117" y="868" style="font-size:19px" textLength="77" lengthAdjust="spacingAndGlyphs">QUARTER</text>
<text x="203" y="868" style="font-size:19px" textLength="42" lengthAdjust="spacingAndGlyphs">YEAR</text>
<text x="254" y="868" style="font-size:19px" textLength="198" lengthAdjust="spacingAndGlyphs">Market Profile Blocks (ES)</text>
<text x="460" y="868" style="font-size:19px" fill="#fff" textLength="30" lengthAdjust="spacingAndGlyphs">500</text>
<text x="3" y="901" style="font-size:19px" fill="#fff" textLength="42" lengthAdjust="spacingAndGlyphs">Silver</text>
<text x="53" y="901" style="font-size:19px" textLength="47" lengthAdjust="spacingAndGlyphs">Crude</text>
<text x="109" y="901" style="font-size:19px" textLength="107" lengthAdjust="spacingAndGlyphs">Dax_mit_delta</text>
<text x="226" y="901" style="font-size:19px" textLength="20" lengthAdjust="spacingAndGlyphs">go</text>
<text x="465" y="901" style="font-size:19px" textLength="63" lengthAdjust="spacingAndGlyphs">500bars</text>
<text x="537" y="901" style="font-size:19px" textLength="36" lengthAdjust="spacingAndGlyphs">FTSE</text>
<text x="581" y="901" style="font-size:19px" textLength="47" lengthAdjust="spacingAndGlyphs">nikkei</text>
</g>

<!-- popup -->
<rect x="246" y="872" width="217" height="37" rx="9" fill="#f2f2f2" stroke="#b8b8b8" stroke-width="1"/>
<path d="M393 872H454A9 9 0 0 1 463 881V900A9 9 0 0 1 454 909H393Z" fill="#e29e99"/>
<rect x="259" y="881" width="21" height="15" fill="#e8eef2" stroke="#b0b8bf"/>
<rect x="261" y="883" width="11" height="12" fill="#4d8aa0"/>
<rect x="282" y="887" width="12" height="12" rx="2" fill="none" stroke="#a8a8a8"/>
<rect x="350" y="885" width="13" height="13" rx="2" fill="none" stroke="#ddd"/>
<path d="M420 882L436 899M436 882L420 899" stroke="#f2d8d6" stroke-width="1.2"/>

<!-- hand drawn red ring -->
<g class="z" transform="translate(0,640) scale(.3827,.3333)">
<path stroke="#e81c1c" stroke-width="6" stroke-linecap="round" stroke-linejoin="round" d="M650 680C665 645 700 622 745 612L800 607L825 600C880 582 950 568 1050 566C1120 570 1170 595 1205 630C1228 665 1236 700 1222 735C1205 768 1150 782 1080 790C1020 796 960 790 900 775C840 763 780 768 720 772C680 768 650 735 640 700C640 690 645 680 650 670"/>
</g>

<!-- bottom badges and message log -->
<circle cx="57" cy="932" r="12" fill="#d01818"/>
<circle cx="1224" cy="933" r="12" fill="#7b1fa2"/>
<rect x="456" y="923" width="300" height="20" rx="8" fill="#fff" stroke="#e2e2e2"/>
<path d="M1458 909V876A10 10 0 0 1 1468 866H1806" stroke="#bcbcbc" stroke-width="1.5" fill="none"/>
<rect x="1459" y="867" width="347" height="42" fill="#f2f2f2"/>
<rect x="1470" y="877" width="22" height="18" fill="#e6ebef" stroke="#a8b4bc"/>
<rect x="1472" y="880" width="9" height="13" fill="#3f9a8f"/>
<path d="M1487 880V888" stroke="#fff" stroke-width="2"/>
<text x="1501" y="894" fill="#8a8a8a" style="font-size:18px" textLength="104" lengthAdjust="spacingAndGlyphs">Message Log</text>
</svg>
</body></html>
